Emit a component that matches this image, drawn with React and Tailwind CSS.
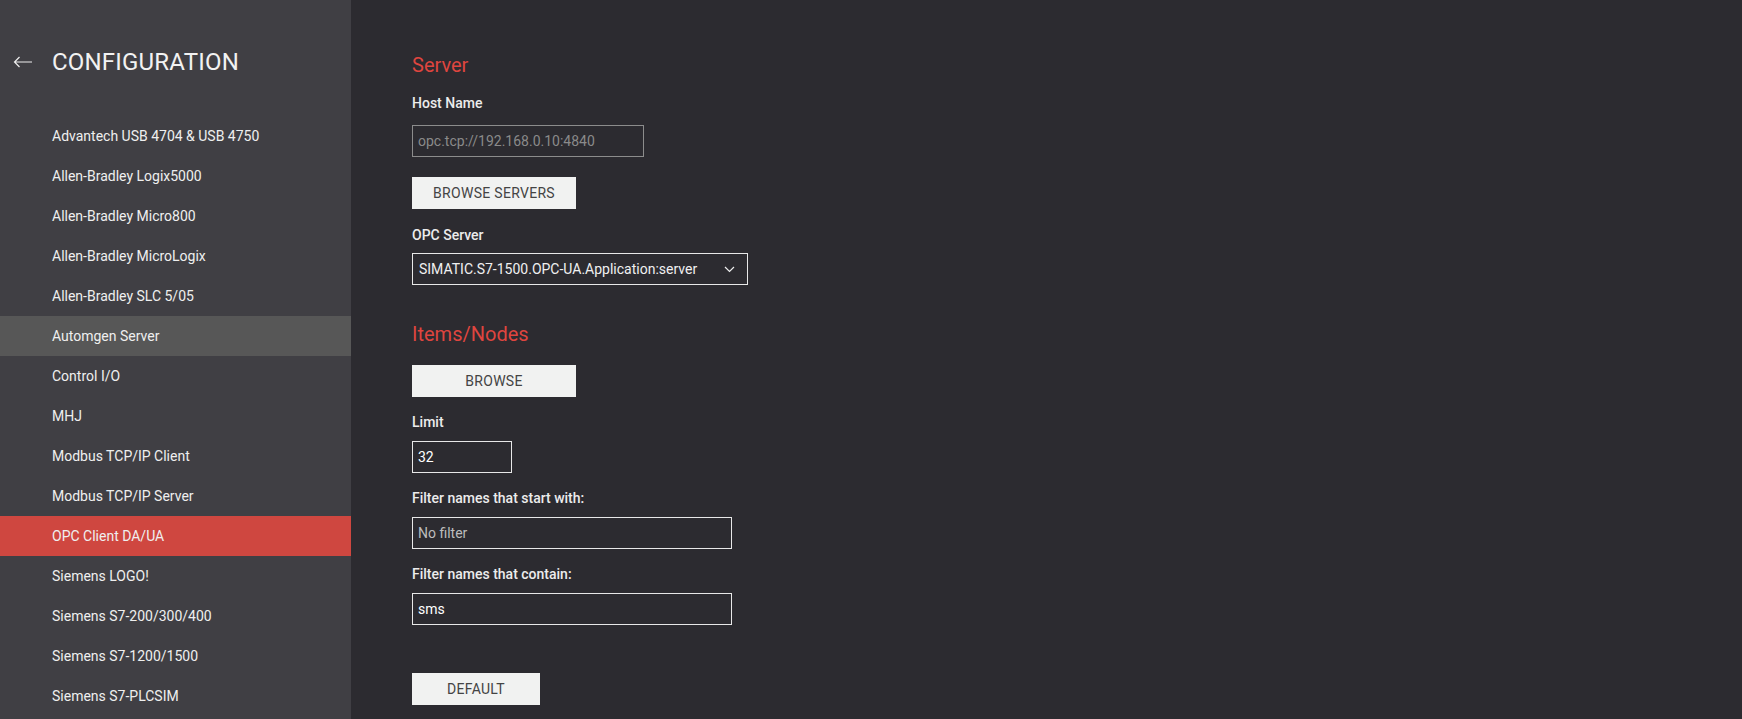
import { useState } from 'react'

const DRIVERS = [
  'Advantech USB 4704 & USB 4750',
  'Allen-Bradley Logix5000',
  'Allen-Bradley Micro800',
  'Allen-Bradley MicroLogix',
  'Allen-Bradley SLC 5/05',
  'Automgen Server',
  'Control I/O',
  'MHJ',
  'Modbus TCP/IP Client',
  'Modbus TCP/IP Server',
  'OPC Client DA/UA',
  'Siemens LOGO!',
  'Siemens S7-200/300/400',
  'Siemens S7-1200/1500',
  'Siemens S7-PLCSIM',
]

function Sidebar({ selected, hovered }) {
  return (
    <aside className="w-[351px] shrink-0 bg-[#403f44] h-full overflow-hidden">
      {/* Header */}
      <div className="flex items-center h-8 mt-[46px]">
        <svg className="ml-[13px] w-[20px] h-[12px]" viewBox="0 0 20 12" fill="none" stroke="#eeeeee" strokeWidth="1.2">
          <path d="M19 6H1.5M6.5 1L1.5 6l5 5" />
        </svg>
        <h1 className="ml-[19px] text-[24px] leading-8 text-[#f2f2f2] tracking-[0.2px]">CONFIGURATION</h1>
      </div>

      {/* Driver list */}
      <ul className="mt-[38px]">
        {DRIVERS.map(d => (
          <li key={d}
            className={`h-10 flex items-center pl-[52px] text-[14px] text-[#efefef] ${d === selected ? 'bg-[#cf4740]' : d === hovered ? 'bg-[#575757]' : ''}`}>
            {d}
          </li>
        ))}
      </ul>
    </aside>
  )
}

function Label({ children, className = '' }) {
  return <p className={`text-[14px] leading-5 font-medium text-[#ececec] ${className}`}>{children}</p>
}

function Button({ children, className = '' }) {
  return (
    <button className={`h-8 bg-[#f1f2f1] text-[#444444] text-[14px] uppercase tracking-[0.3px] ${className}`}>
      {children}
    </button>
  )
}

export default function App() {
  const [limit, setLimit] = useState('32')
  const [startsWith, setStartsWith] = useState('')
  const [contains, setContains] = useState('sms')

  return (
    <div className="flex w-full h-[719px] bg-[#2c2b30] overflow-hidden" style={{ fontFamily: 'Roboto, "Liberation Sans", sans-serif' }}>
      <Sidebar selected="OPC Client DA/UA" hovered="Automgen Server" />

      <main className="flex-1 pl-[61px] pt-[51px]">
        {/* Server */}
        <h2 className="text-[20px] leading-7 text-[#df453f]">Server</h2>
        <Label className="mt-[14px]">Host Name</Label>
        <input readOnly placeholder="opc.tcp://192.168.0.10:4840"
          className="mt-[12px] block w-[232px] h-8 px-[5px] bg-transparent border border-[#8c8c8c] text-[14px] text-white placeholder-[#8a8a8a] outline-none" />
        <Button className="mt-[20px] block w-[164px]">Browse Servers</Button>

        <Label className="mt-[16px]">OPC Server</Label>
        <div className="mt-[8px] w-[336px] h-8 border border-[#e8e8e8] flex items-center justify-between pl-[6px] pr-[12px]">
          <span className="text-[14px] text-[#f0f0f0]">SIMATIC.S7-1500.OPC-UA.Application:server</span>
          <svg className="w-[11px] h-[7px]" viewBox="0 0 11 7" fill="none" stroke="#eeeeee" strokeWidth="1.2">
            <path d="M1 1l4.5 4.5L10 1" />
          </svg>
        </div>

        {/* Items/Nodes */}
        <h2 className="mt-[35px] text-[20px] leading-7 text-[#df453f]">Items/Nodes</h2>
        <Button className="mt-[17px] block w-[164px]">Browse</Button>

        <Label className="mt-[15px]">Limit</Label>
        <input value={limit} onChange={e => setLimit(e.target.value)}
          className="mt-[9px] block w-[100px] h-8 px-[5px] bg-transparent border border-[#e8e8e8] text-[14px] text-white outline-none" />

        <Label className="mt-[15px]">Filter names that start with:</Label>
        <input value={startsWith} onChange={e => setStartsWith(e.target.value)} placeholder="No filter"
          className="mt-[9px] block w-[320px] h-8 px-[5px] bg-transparent border border-[#e8e8e8] text-[14px] text-white placeholder-[#bdbdbd] outline-none" />

        <Label className="mt-[15px]">Filter names that contain:</Label>
        <input value={contains} onChange={e => setContains(e.target.value)}
          className="mt-[9px] block w-[320px] h-8 px-[5px] bg-transparent border border-[#e8e8e8] text-[14px] text-white outline-none" />

        <Button className="mt-[48px] block w-[128px]">Default</Button>
      </main>
    </div>
  )
}
